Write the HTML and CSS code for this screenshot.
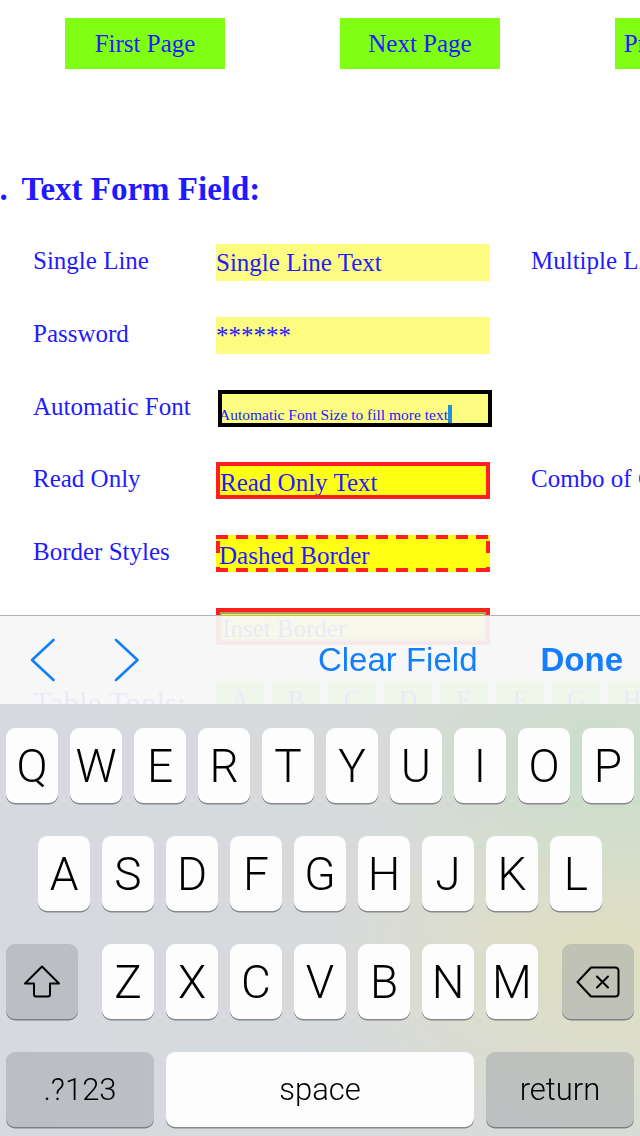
FILE: index.html
```html
<!DOCTYPE html>
<html>
<head>
<meta charset="utf-8">
<link rel="stylesheet" href="styles.css">
</head>
<body>
<div class="page">
  <div class="nav">
    <div class="nav-btn">First Page</div>
    <div class="nav-btn">Next Page</div>
    <div class="nav-btn">Previous Page</div>
  </div>
  <h1 class="heading"><span class="num">1.</span> Text Form Field:</h1>
  <div class="form">
    <div class="label">Single Line</div>
    <div class="field">Single Line Text</div>
    <div class="gap"></div>
    <div class="label">Multiple Line</div>

    <div class="label">Password</div>
    <div class="field">******</div>
    <div class="gap"></div>
    <div class="gap"></div>

    <div class="label">Automatic Font</div>
    <div class="field auto">Automatic Font Size to fill more text<span class="caret"></span></div>
    <div class="gap"></div>
    <div class="gap"></div>

    <div class="label">Read Only</div>
    <div class="field ro">Read Only Text</div>
    <div class="gap"></div>
    <div class="label">Combo of Choice</div>

    <div class="label">Border Styles</div>
    <div class="field dashed">Dashed Border</div>
    <div class="gap"></div>
    <div class="gap"></div>

    <div class="label"></div>
    <div class="field inset">Inset Border</div>
    <div class="gap"></div>
    <div class="gap"></div>

    <div class="label big">Table Tools:</div>
    <div class="cells">
      <div class="cell">A</div><div class="cell">B</div><div class="cell">C</div><div class="cell">D</div>
      <div class="cell">E</div><div class="cell">F</div><div class="cell">G</div><div class="cell">H</div>
    </div>
  </div>
</div>

<div class="input-panel">
  <div class="accessory">
    <svg class="chev" width="26" height="44" viewBox="0 0 26 44"><path d="M23.5 2 L2 22 L23.5 42" fill="none" stroke="#157efb" stroke-width="2.6" stroke-linecap="round" stroke-linejoin="round"/></svg>
    <svg class="chev next" width="26" height="44" viewBox="0 0 26 44"><path d="M2 2 L23.5 22 L2 42" fill="none" stroke="#157efb" stroke-width="2.6" stroke-linecap="round" stroke-linejoin="round"/></svg>
    <span class="clear">Clear Field</span>
    <span class="done">Done</span>
  </div>
  <div class="keyboard">
    <div class="krow r1">
      <div class="key">Q</div><div class="key">W</div><div class="key">E</div><div class="key">R</div><div class="key">T</div>
      <div class="key">Y</div><div class="key">U</div><div class="key">I</div><div class="key">O</div><div class="key">P</div>
    </div>
    <div class="krow r2">
      <div class="key">A</div><div class="key">S</div><div class="key">D</div><div class="key">F</div><div class="key">G</div>
      <div class="key">H</div><div class="key">J</div><div class="key">K</div><div class="key">L</div>
    </div>
    <div class="krow r3">
      <div class="key fn shift">
        <svg width="38" height="33" viewBox="0 0 38 33"><path d="M19 1.5 L2 18.5 H11 V29.5 Q11 31.5 13 31.5 H25 Q27 31.5 27 29.5 V18.5 H36 Z" fill="none" stroke="#000" stroke-width="2" stroke-linejoin="round"/></svg>
      </div>
      <div class="key">Z</div><div class="key">X</div><div class="key">C</div><div class="key">V</div>
      <div class="key">B</div><div class="key">N</div><div class="key">M</div>
      <div class="key fn del">
        <svg width="44" height="32" viewBox="0 0 44 32"><path d="M1.5 16 L15 1.5 H39 Q42.5 1.5 42.5 5 V27 Q42.5 30.5 39 30.5 H15 Z" fill="none" stroke="#000" stroke-width="2" stroke-linejoin="round"/><path d="M21 10.5 L32 21.5 M32 10.5 L21 21.5" stroke="#000" stroke-width="2" stroke-linecap="round"/></svg>
      </div>
    </div>
    <div class="krow r4">
      <div class="key fn small wide">.?123</div>
      <div class="key small space">space</div>
      <div class="key fn small wide">return</div>
    </div>
  </div>
</div>
</body>
</html>
```
FILE: styles.css
```css
* { box-sizing: border-box; }
html, body { margin: 0; padding: 0; }
body {
  width: 640px;
  height: 1136px;
  overflow: hidden;
  background: #ffffff;
  font-family: "Liberation Serif", "Times New Roman", serif;
  color: #1f1aff;
}

.nav {
  display: flex;
  gap: 115px;
  padding: 18px 0 0 65px;
}
.nav-btn {
  flex: 0 0 160px;
  height: 51px;
  background: #80ff14;
  font-size: 25px;
  display: flex;
  align-items: center;
  justify-content: center;
  white-space: nowrap;
}

.heading {
  margin: 100px 0 0 -17px;
  font-size: 33px;
  font-weight: bold;
  line-height: 40px;
  white-space: nowrap;
}
.num { margin-right: 6px; }

.form {
  display: grid;
  grid-template-columns: 183px 274px 41px max-content;
  grid-auto-rows: 37px;
  row-gap: 35.8px;
  margin: 35px 0 0 33px;
}
.label {
  font-size: 25px;
  line-height: 33px;
  white-space: nowrap;
}
.label.big { font-size: 31px; line-height: 46px; }
.field {
  font-size: 25px;
  line-height: 37px;
  background: #fcfc80;
  white-space: nowrap;
  overflow: hidden;
}
.field.auto {
  justify-self: start;
  width: 274px;
  margin-left: 2px;
  border: 4px solid #000;
  font-size: 15.5px;
  line-height: 17px;
  padding-top: 11px;
  text-indent: -3px;
}
.caret {
  display: inline-block;
  width: 4px;
  height: 18px;
  background: #1e90e0;
  vertical-align: -3px;
}
.field.ro {
  border: 4px solid #ff1f1f;
  background: #ffff14;
  line-height: 34px;
}
.field.dashed {
  background:
    repeating-linear-gradient(90deg, #ff1f1f 0 12px, transparent 12px 20px) top left / 100% 4px no-repeat,
    repeating-linear-gradient(90deg, #ff1f1f 0 12px, transparent 12px 20px) bottom left / 100% 4px no-repeat,
    repeating-linear-gradient(180deg, transparent 0 6px, #ff1f1f 6px 18px, transparent 18px 26px) top left / 4px 100% no-repeat,
    repeating-linear-gradient(180deg, transparent 0 6px, #ff1f1f 6px 18px, transparent 18px 26px) top right / 4px 100% no-repeat,
    #ffff14;
  line-height: 42px;
  padding-left: 3px;
}
.field.inset {
  border: 4px solid #ff1f1f;
  box-shadow: inset 0 0 0 2px #a6a65a;
  background: #ffff14;
  line-height: 34px;
  padding-left: 2px;
}
.cells {
  grid-column: 2 / span 3;
  display: flex;
  gap: 8px;
}
.cell {
  width: 48px;
  height: 37px;
  background: #80ff14;
  font-size: 25px;
  line-height: 37px;
  text-align: center;
}

/* input overlay */
.input-panel {
  position: fixed;
  left: 0;
  right: 0;
  bottom: 0;
  height: 521px;
  display: flex;
  flex-direction: column;
}
.accessory {
  height: 89px;
  flex: 0 0 89px;
  border-top: 1px solid #b3b3b3;
  background: rgba(247, 247, 248, 0.94);
  display: flex;
  align-items: center;
  padding: 0 17px 0 30px;
  font-family: "Liberation Sans", Arial, sans-serif;
  font-size: 33px;
  color: #157efb;
}
.chev.next { margin-left: 58px; }
.clear { margin-left: auto; }
.done { margin-left: 63px; font-weight: bold; }

.keyboard {
  flex: 1;
  padding-top: 24px;
  display: flex;
  flex-direction: column;
  gap: 33px;
  background:
    radial-gradient(ellipse 320px 190px at 600px 60px, rgba(200, 222, 200, 0.9), rgba(200, 222, 200, 0) 75%),
    radial-gradient(ellipse 380px 240px at 610px 250px, rgba(224, 223, 190, 0.9), rgba(224, 223, 190, 0) 75%),
    linear-gradient(90deg, #d6d9dd 0%, #d7dadd 40%, #d9dcd6 100%);
  font-family: Roboto, "Liberation Sans", Arial, sans-serif;
}
.krow {
  display: flex;
  gap: 12px;
  height: 75px;
}
.r1 { padding-left: 6px; }
.r2 { justify-content: center; }
.r3 { padding: 0 6px; }
.r4 { padding: 0 6px; }
.key {
  width: 52px;
  height: 75px;
  background: #fdfdfd;
  border-radius: 9px;
  box-shadow: 0 1.5px 0 #88898c;
  display: flex;
  align-items: center;
  justify-content: center;
  font-size: 46px;
  font-weight: 300;
  color: #000;
}
.key.fn {
  background: rgba(150, 156, 163, 0.42);
  box-shadow: 0 1.5px 0 #7e8084;
}
.key.shift { width: 72px; margin-right: 12px; }
.key.del { width: 72px; margin-left: 12px; }
.key.small { font-size: 31px; }
.key.wide { width: 148px; }
.key.space { width: 308px; }
```
